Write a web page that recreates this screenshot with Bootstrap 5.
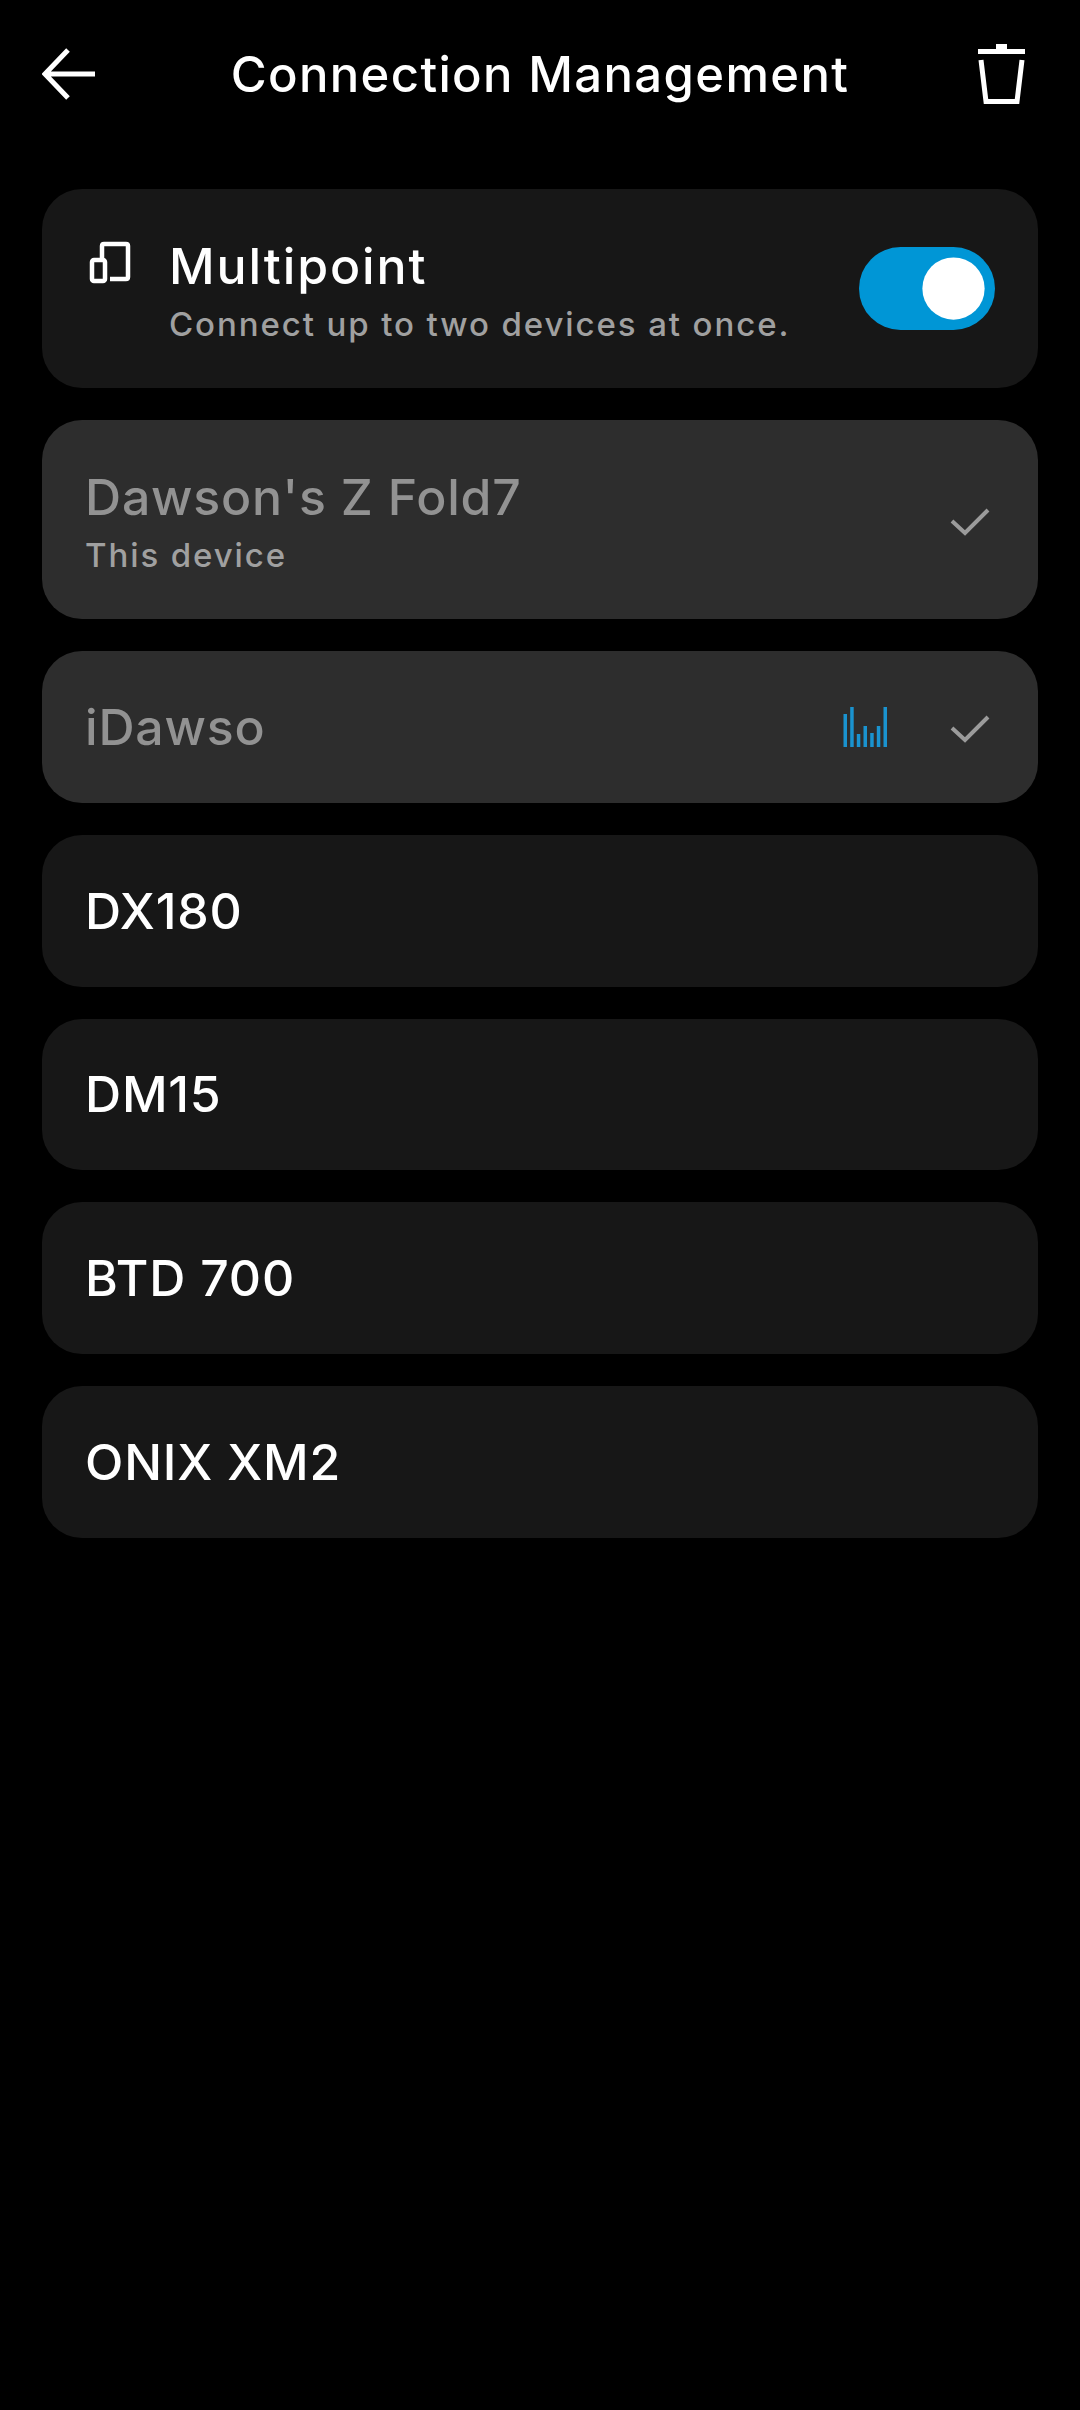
<!DOCTYPE html>
<html lang="en">
<head>
<meta charset="utf-8">
<title>Connection Management</title>
<link href="https://cdn.jsdelivr.net/npm/bootstrap@5.3.0/dist/css/bootstrap.min.css" rel="stylesheet">
<style>
html,body{background:#000;}
body{font-family:Inter,"Liberation Sans",sans-serif;color:#fff;min-height:2410px;}
.topbar{height:189px;padding:0 42px 41px;}
.ic-slot{width:62px;}
.ic-slot-end{padding-right:12px;}
.page-title{font-size:49px;line-height:1;font-weight:500;margin:0;letter-spacing:1.35px;}
.stack{padding:0 42px;gap:32px;}
.tile{background:#171717;border-radius:40px;padding:0 43px;height:151.75px;}
.tile-tall{height:199px;}
.tile-on{background:#2d2d2d;}
.dev-name{font-size:50px;line-height:56px;font-weight:500;letter-spacing:.8px;}
.mp-name{letter-spacing:1.9px;}
.tile-on .dev-name{color:#929292;}
.dev-sub{font-size:33px;line-height:60px;font-weight:500;color:#a0a0a0;letter-spacing:1.9px;}
.txt-block{padding-top:15px;}
.mp-icon{width:84px;padding:52px 0 0 4px;}
.sw.form-check-input{width:136px;height:83px;margin:0;border:0;border-radius:42px;background-color:#0096d6;box-shadow:none;flex:none;}
.switch-wrap{padding:0;margin:0;min-height:0;}
.eq{margin-right:63px;}
.tick{margin:4px 5px 0 0;}
</style>
</head>
<body>
<header class="topbar d-flex align-items-center justify-content-between">
  <div class="ic-slot">
    <svg width="56" height="52" viewBox="42 47 56 52" class="d-block" fill="none" stroke="#fff" stroke-width="5"><path d="M68 49 45 73 68 97M46 73H95"/></svg>
  </div>
  <h1 class="page-title">Connection Management</h1>
  <div class="ic-slot ic-slot-end d-flex justify-content-end">
    <svg width="48" height="62" viewBox="978 41 48 62" class="d-block" fill="none" stroke="#fff" stroke-width="5"><path d="M978 49.500H1025"/><path fill="#fff" stroke="none" d="M996 42h11v6h-11z"/><path d="M981 58 986 99.500H1017L1022 58"/></svg>
  </div>
</header>
<main class="stack d-flex flex-column">
  <section class="tile tile-tall d-flex align-items-center">
    <div class="mp-icon align-self-start">
      <svg width="42" height="43" viewBox="89 241 42 43" class="d-block" fill="none" stroke="#fff" stroke-width="4.500"><path d="M102 258V246q0-2 2-2H126q2 0 2 2V277q0 2-2 2H110"/><rect x="92" y="260" width="13" height="21" rx="2"/></svg>
    </div>
    <div class="flex-grow-1 txt-block">
      <div class="dev-name mp-name">Multipoint</div>
      <div class="dev-sub">Connect up to two devices at once.</div>
    </div>
    <div class="form-check form-switch switch-wrap">
      <input class="form-check-input sw" type="checkbox" role="switch" checked aria-label="Multipoint">
    </div>
  </section>
  <section class="tile tile-tall tile-on d-flex align-items-center justify-content-between">
    <div class="txt-block">
      <div class="dev-name">Dawson's Z Fold7</div>
      <div class="dev-sub">This device</div>
    </div>
    <svg class="tick" width="40" height="28" viewBox="0 0 40 28" fill="none" stroke="#9b9b9b" stroke-width="4"><path d="M2 13 15 25 38 2"/></svg>
  </section>
  <section class="tile tile-on d-flex align-items-center">
    <div class="dev-name flex-grow-1">iDawso</div>
    <svg class="eq" width="44" height="40" viewBox="0 0 44 40" fill="#1a93cf"><rect x="0.500" y="7" width="3.500" height="33"/><rect x="7.200" y="0" width="3.500" height="40"/><rect x="13.800" y="27" width="3.500" height="13"/><rect x="20.500" y="19" width="3.500" height="21"/><rect x="27.200" y="26" width="3.500" height="14"/><rect x="33.800" y="19" width="3.500" height="21"/><rect x="40.500" y="0" width="3.500" height="40"/></svg>
    <svg class="tick" width="40" height="28" viewBox="0 0 40 28" fill="none" stroke="#9b9b9b" stroke-width="4"><path d="M2 13 15 25 38 2"/></svg>
  </section>
  <section class="tile d-flex align-items-center"><div class="dev-name">DX180</div></section>
  <section class="tile d-flex align-items-center"><div class="dev-name">DM15</div></section>
  <section class="tile d-flex align-items-center"><div class="dev-name">BTD 700</div></section>
  <section class="tile d-flex align-items-center"><div class="dev-name">ONIX XM2</div></section>
</main>
<script src="https://cdn.jsdelivr.net/npm/bootstrap@5.3.0/dist/js/bootstrap.bundle.min.js"></script>
</body>
</html>
